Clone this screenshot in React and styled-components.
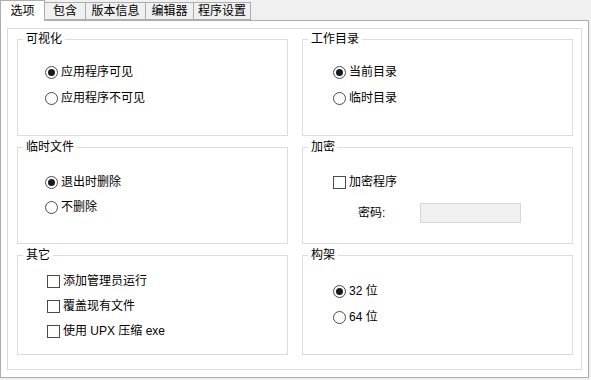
import React from 'react';
import styled, { createGlobalStyle } from 'styled-components';

const GlobalStyle = createGlobalStyle`
  html, body {
    margin: 0;
    padding: 0;
    background: #f0f0f0;
  }
  body {
    font-family: "Liberation Sans", "Noto Sans CJK SC", sans-serif;
    font-size: 12px;
    color: #000;
  }
`;

const Window = styled.div`
  width: 591px;
  height: 380px;
  background: #f0f0f0;
  box-sizing: border-box;
`;

const TabStrip = styled.div`
  display: flex;
  align-items: flex-end;
  height: 20px;
  position: relative;
  z-index: 1;
`;

const Tab = styled.div`
  box-sizing: border-box;
  width: ${(p) => p.w}px;
  height: ${(p) => (p.active ? 21 : 18)}px;
  margin-bottom: ${(p) => (p.active ? -1 : 0)}px;
  margin-left: ${(p) => (p.first ? 0 : -1)}px;
  border: 1px solid #adadad;
  border-bottom: ${(p) => (p.active ? 'none' : '1px solid #adadad')};
  background: ${(p) => (p.active ? '#fff' : '#f0f0f0')};
  display: flex;
  align-items: center;
  justify-content: center;
  line-height: 14px;
  padding-bottom: ${(p) => (p.active ? 1 : 0)}px;
  position: relative;
  z-index: ${(p) => (p.active ? 2 : 1)};
`;

const Panel = styled.div`
  box-sizing: border-box;
  width: 589px;
  height: 358px;
  border: 1px solid #adadad;
  background: #fff;
  padding: 7px 6px;
`;

const Frame = styled.div`
  box-sizing: border-box;
  height: 342px;
  border: 1px solid #dcdcdc;
  padding: 10px 8px 0 9px;
  display: grid;
  grid-template-columns: 271px 271px;
  grid-template-rows: 97px 97px 100px;
  column-gap: 14px;
  row-gap: 11px;
`;

const Group = styled.div`
  position: relative;
  box-sizing: border-box;
  border: 1px solid #dcdcdc;
`;

const GroupTitle = styled.span`
  position: absolute;
  top: -8px;
  left: 5px;
  padding: 0 3px;
  background: #fff;
  line-height: 14px;
`;

const Options = styled.div`
  display: flex;
  flex-direction: column;
  gap: ${(p) => p.gap}px;
  padding-top: ${(p) => p.top}px;
  padding-left: ${(p) => p.left}px;
`;

const Row = styled.label`
  display: flex;
  align-items: center;
  gap: 3px;
  height: 14px;
  line-height: 14px;
  white-space: pre;
`;

const Radio = styled.span`
  box-sizing: border-box;
  width: 13px;
  height: 13px;
  border: 1px solid #4a4a4a;
  border-radius: 50%;
  background: #fff;
  display: flex;
  align-items: center;
  justify-content: center;

  &::after {
    content: '';
    width: 7px;
    height: 7px;
    border-radius: 50%;
    background: ${(p) => (p.checked ? '#1a1a1a' : 'transparent')};
  }
`;

const Check = styled.span`
  box-sizing: border-box;
  width: 13px;
  height: 13px;
  border: 1px solid #4a4a4a;
  background: #fff;
`;

const PasswordRow = styled.div`
  display: flex;
  align-items: center;
  padding-left: 55px;
  margin-top: 14px;
`;

const PasswordLabel = styled.span`
  width: 62px;
  line-height: 14px;
`;

const PasswordInput = styled.div`
  box-sizing: border-box;
  width: 101px;
  height: 20px;
  border: 1px solid #d6d6d6;
  background: #f0f0f0;
`;

const tabs = [
  { label: '选项', w: 45, active: true },
  { label: '包含', w: 42 },
  { label: '版本信息', w: 61 },
  { label: '编辑器', w: 49 },
  { label: '程序设置', w: 58 },
];

function RadioItem({ checked, children }) {
  return (
    <Row>
      <Radio checked={checked} />
      {children}
    </Row>
  );
}

function CheckItem({ children }) {
  return (
    <Row>
      <Check />
      {children}
    </Row>
  );
}

export default function App() {
  return (
    <Window>
      <GlobalStyle />
      <TabStrip>
        {tabs.map((t, i) => (
          <Tab key={t.label} w={t.w} active={t.active} first={i === 0}>
            {t.label}
          </Tab>
        ))}
      </TabStrip>
      <Panel>
        <Frame>
          <Group>
            <GroupTitle>可视化</GroupTitle>
            <Options top={25} left={27} gap={12}>
              <RadioItem checked>应用程序可见</RadioItem>
              <RadioItem>应用程序不可见</RadioItem>
            </Options>
          </Group>
          <Group>
            <GroupTitle>工作目录</GroupTitle>
            <Options top={25} left={30} gap={12}>
              <RadioItem checked>当前目录</RadioItem>
              <RadioItem>临时目录</RadioItem>
            </Options>
          </Group>
          <Group>
            <GroupTitle>临时文件</GroupTitle>
            <Options top={27} left={27} gap={11}>
              <RadioItem checked>退出时删除</RadioItem>
              <RadioItem>不删除</RadioItem>
            </Options>
          </Group>
          <Group>
            <GroupTitle>加密</GroupTitle>
            <Options top={27} left={30} gap={0}>
              <CheckItem>加密程序</CheckItem>
            </Options>
            <PasswordRow>
              <PasswordLabel>密码:</PasswordLabel>
              <PasswordInput />
            </PasswordRow>
          </Group>
          <Group>
            <GroupTitle>其它</GroupTitle>
            <Options top={18} left={29} gap={11}>
              <CheckItem>添加管理员运行</CheckItem>
              <CheckItem>覆盖现有文件</CheckItem>
              <CheckItem>使用 UPX 压缩 exe</CheckItem>
            </Options>
          </Group>
          <Group>
            <GroupTitle>构架</GroupTitle>
            <Options top={28} left={30} gap={12}>
              <RadioItem checked>32 位</RadioItem>
              <RadioItem>64 位</RadioItem>
            </Options>
          </Group>
        </Frame>
      </Panel>
    </Window>
  );
}
